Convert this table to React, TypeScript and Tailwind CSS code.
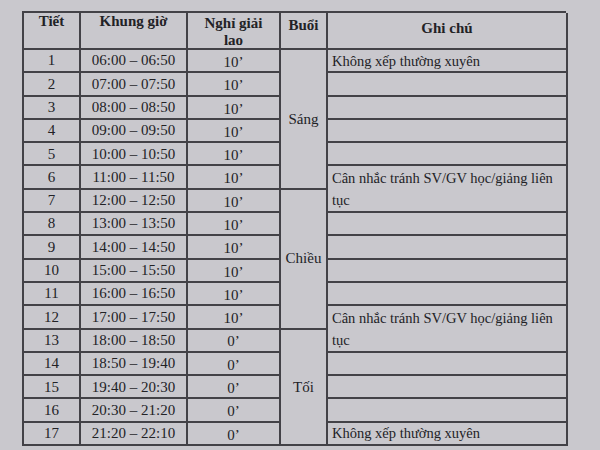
import React from 'react';

const ROWS = [
  ['1', '06:00 – 06:50', '10’'],
  ['2', '07:00 – 07:50', '10’'],
  ['3', '08:00 – 08:50', '10’'],
  ['4', '09:00 – 09:50', '10’'],
  ['5', '10:00 – 10:50', '10’'],
  ['6', '11:00 – 11:50', '10’'],
  ['7', '12:00 – 12:50', '10’'],
  ['8', '13:00 – 13:50', '10’'],
  ['9', '14:00 – 14:50', '10’'],
  ['10', '15:00 – 15:50', '10’'],
  ['11', '16:00 – 16:50', '10’'],
  ['12', '17:00 – 17:50', '10’'],
  ['13', '18:00 – 18:50', '0’'],
  ['14', '18:50 – 19:40', '0’'],
  ['15', '19:40 – 20:30', '0’'],
  ['16', '20:30 – 21:20', '0’'],
  ['17', '21:20 – 22:10', '0’'],
];

// notes column has its own split: some cells cover two periods
const NOTES: { text: string; span: 1 | 2 }[] = [
  { text: 'Không xếp thường xuyên', span: 1 },
  { text: '', span: 1 },
  { text: '', span: 1 },
  { text: '', span: 1 },
  { text: '', span: 1 },
  { text: 'Cân nhắc tránh SV/GV học/giảng liên|tục', span: 2 },
  { text: '', span: 1 },
  { text: '', span: 1 },
  { text: '', span: 1 },
  { text: '', span: 1 },
  { text: 'Cân nhắc tránh SV/GV học/giảng liên|tục', span: 2 },
  { text: '', span: 1 },
  { text: '', span: 1 },
  { text: '', span: 1 },
  { text: 'Không xếp thường xuyên', span: 1 },
];

const cell = 'border-r-2 border-b-2 border-[#434247]';

const App: React.FC = () => {
  let noteRow = 2;
  return (
    <div className="w-[600px] h-[450px] bg-[#c9c8cd]">
      <div className="pt-[11px] pl-[22px] text-[#222226] font-['Liberation_Serif','DejaVu_Serif',serif]">
        <div className="w-[544px] grid grid-cols-[57px_107px_93px_47px_240px] grid-rows-[37px_repeat(17,23.3px)] border-t-2 border-l-2 border-[#434247] text-[15px]">
          {/* header */}
          <div className={`${cell} col-start-1 row-start-1 text-center font-bold leading-[17px]`}>Tiết</div>
          <div className={`${cell} col-start-2 row-start-1 text-center font-bold leading-[17px]`}>Khung giờ</div>
          <div className={`${cell} col-start-3 row-start-1 text-center font-bold leading-[17px] pt-[2px]`}>
            Nghỉ giải
            <br />
            lao
          </div>
          <div className={`${cell} col-start-4 row-start-1 text-center font-bold leading-[17px] pt-[4px]`}>Buổi</div>
          <div className={`${cell} col-start-5 row-start-1 text-center font-bold leading-[17px] pt-[7px]`}>Ghi chú</div>

          {ROWS.map((r, i) => (
            <React.Fragment key={r[0]}>
              <div className={`${cell} col-start-1 flex items-center justify-center`} style={{ gridRow: i + 2 }}>
                {r[0]}
              </div>
              <div className={`${cell} col-start-2 flex items-center justify-center`} style={{ gridRow: i + 2 }}>
                {r[1]}
              </div>
              <div className={`${cell} col-start-3 flex items-center justify-center pt-[3px]`} style={{ gridRow: i + 2 }}>
                {r[2]}
              </div>
            </React.Fragment>
          ))}

          <div className={`${cell} col-start-4 row-start-2 row-span-6 flex items-center justify-center`}>Sáng</div>
          <div className={`${cell} col-start-4 row-start-8 row-span-6 flex items-center justify-center`}>Chiều</div>
          <div className={`${cell} col-start-4 row-start-14 row-span-5 flex items-center justify-center`}>Tối</div>

          {NOTES.map((n, i) => {
            const start = noteRow;
            noteRow += n.span;
            const lines = n.text.split('|');
            return (
              <div
                key={i}
                className={`${cell} col-start-5 px-[4px] text-[14.5px] leading-[22px] whitespace-nowrap ${n.span === 2 ? 'pt-[1px]' : 'flex items-center'}`}
                style={{ gridRow: `${start} / span ${n.span}` }}
              >
                {lines.map((l, j) => (
                  <div key={j}>{l}</div>
                ))}
              </div>
            );
          })}
        </div>
      </div>
    </div>
  );
};

export default App;
